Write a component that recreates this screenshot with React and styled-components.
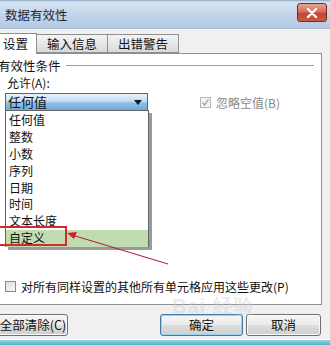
import React from 'react';
import styled, { createGlobalStyle } from 'styled-components';

const GlobalStyle = createGlobalStyle`
  html, body { margin: 0; padding: 0; background: #f0f0f0; }
  body { font-family: "Noto Sans CJK SC", "Noto Sans", sans-serif; }
`;

const Window = styled.div`
  position: relative;
  width: 330px;
  height: 345px;
  overflow: hidden;
  background: #f0f0f0;
  display: flex;
  flex-direction: column;
  color: #111;
`;

const TitleBar = styled.div`
  height: 29px;
  flex: none;
  display: flex;
  align-items: center;
  justify-content: space-between;
  padding: 0 3px 0 5px;
  box-sizing: border-box;
  background: linear-gradient(180deg, #8aa7c7 0px, #d6e3f1 2px, #c4d6ea 14px, #b3c9e2 100%);
  border-bottom: 1px solid #a8bdd6;
`;

const Title = styled.span`
  font-size: 12.5px;
  color: #1b2a3a;
`;

const CloseButton = styled.div`
  width: 28px;
  height: 17px;
  margin-top: -3px;
  border: 1px solid #7a2a20;
  border-radius: 3px;
  background: linear-gradient(180deg, #e9a493 0%, #d6705a 45%, #c24a36 55%, #c9583f 100%);
  display: flex;
  align-items: center;
  justify-content: center;
`;

const Body = styled.div`
  flex: 1;
  display: flex;
  flex-direction: column;
  margin-left: -2px;
`;

const TabRow = styled.div`
  display: flex;
  align-items: flex-end;
  height: 23px;
  margin-top: 1px;
  position: relative;
  z-index: 2;
`;

const Tab = styled.div`
  height: ${({ $active }) => ($active ? 21 : 19)}px;
  box-sizing: border-box;
  padding: 0 ${({ $active }) => ($active ? 8 : 10)}px 0 ${({ $active }) => ($active ? 5 : 10)}px;
  display: flex;
  align-items: center;
  font-size: 12.5px;
  line-height: 14px;
  border: 1px solid #8e8f8f;
  border-bottom: ${({ $active }) => ($active ? 'none' : '1px solid #8e8f8f')};
  margin-left: ${({ $active }) => ($active ? 0 : -1)}px;
  background: ${({ $active }) => ($active ? '#fff' : 'linear-gradient(180deg, #f4f4f4 0%, #e6e6e6 55%, #d9d9d9 100%)')};
  ${({ $active }) => $active && 'margin-bottom: -1px; border-left: none;'}
`;

const Panel = styled.div`
  position: relative;
  width: 324px;
  height: 252px;
  box-sizing: border-box;
  background: #fff;
  border: 1px solid #8e8f8f;
  border-left: none;
  padding: 3px 0 0 0;
  display: flex;
  flex-direction: column;
`;

const GroupHeader = styled.div`
  display: flex;
  align-items: center;
  gap: 5px;
  font-size: 12.5px;
  line-height: 17px;
  height: 17px;
  width: 316px;
`;

const GroupLine = styled.div`
  flex: 1;
  height: 1px;
  background: #a0a0a0;
`;

const Label = styled.div`
  font-size: 12px;
  margin: 1px 0 0 9px;
  height: 16px;
  line-height: 16px;
`;

const FieldRow = styled.div`
  display: flex;
  align-items: center;
  margin-top: 2px;
`;

const Select = styled.div`
  width: 143px;
  height: 18px;
  margin-left: 7px;
  box-sizing: border-box;
  border: 1px solid #5a6470;
  background: linear-gradient(180deg, #eaf3fb 0%, #c2dcf2 45%, #8fc0e6 55%, #6eaadb 100%);
  display: flex;
  align-items: center;
  justify-content: space-between;
  padding: 0 5px 0 2px;
  font-size: 13px;
  line-height: 16px;
`;

const Arrow = styled.div`
  width: 0;
  height: 0;
  border-left: 4px solid transparent;
  border-right: 4px solid transparent;
  border-top: 5px solid #1b1b1b;
`;

const CheckRow = styled.div`
  display: flex;
  align-items: center;
  gap: 5px;
  font-size: 12px;
  line-height: 15px;
  margin-left: ${({ $ml }) => $ml || 0}px;
  color: ${({ $disabled }) => ($disabled ? '#8a8a8a' : '#111')};
`;

const Box = styled.span`
  width: 11px;
  height: 11px;
  flex: none;
  box-sizing: border-box;
  border: 1px solid ${({ $disabled }) => ($disabled ? '#b8b8b8' : '#8a8a8a')};
  background: ${({ $disabled }) => ($disabled ? '#f4f4f4' : 'linear-gradient(135deg, #dcdcdc, #fafafa)')};
  display: inline-flex;
  align-items: center;
  justify-content: center;
`;

const Spacer = styled.div`
  flex: 1;
`;

const BottomCheck = styled.div`
  padding: 0 0 10px 7px;
`;

const DropList = styled.div`
  position: absolute;
  left: 7px;
  top: 56px;
  width: 144px;
  height: 137px;
  box-sizing: border-box;
  border: 1px solid #646464;
  background: #fff;
  box-shadow: 3px 3px 0 #9a9a9a;
  display: flex;
  flex-direction: column;
  padding-top: 1px;
  z-index: 3;
`;

const Item = styled.div`
  height: 16.9px;
  line-height: 16.9px;
  font-size: 12px;
  padding-left: 3px;
  background: ${({ $hot }) => ($hot ? '#c1dcb1' : 'transparent')};
`;

const RedBox = styled.div`
  position: absolute;
  left: -2px;
  top: 172px;
  width: 71px;
  height: 20px;
  box-sizing: border-box;
  border: 2px solid #d22b2b;
  z-index: 4;
`;

const Annotation = styled.svg`
  position: absolute;
  left: 60px;
  top: 170px;
  z-index: 5;
`;

const ButtonRow = styled.div`
  display: flex;
  align-items: center;
  height: 24px;
  margin-top: 8px;
  padding-right: 9px;
`;

const Button = styled.div`
  height: 22px;
  width: ${({ $w }) => $w}px;
  margin-left: ${({ $ml }) => $ml || 0}px;
  box-sizing: border-box;
  border: 1px solid ${({ $primary }) => ($primary ? '#3d7bad' : '#707070')};
  border-radius: 3px;
  background: linear-gradient(180deg, #f6f6f6 0%, #ebebeb 48%, #dddddd 52%, #cfcfcf 100%);
  box-shadow: ${({ $primary }) => ($primary ? 'inset 0 0 0 1px #9fd2f0' : 'inset 0 0 0 1px #fbfbfb')};
  display: flex;
  align-items: center;
  justify-content: center;
  font-size: 12.5px;
  line-height: 14px;
`;

const Footer = styled.div`
  margin-top: auto;
  height: 5px;
  border-top: 1px solid #fff;
  background: linear-gradient(180deg, #8fd3df 0%, #4fb3c6 100%);
  margin-left: 2px;
`;

const Watermark = styled.div`
  position: absolute;
  left: 172px;
  top: 296px;
  font-family: "Liberation Sans", sans-serif;
  font-size: 20px;
  line-height: 20px;
  font-weight: bold;
  color: rgba(200, 205, 212, 0.4);
  letter-spacing: 1px;
  z-index: 6;
  pointer-events: none;
`;

const items = ['任何值', '整数', '小数', '序列', '日期', '时间', '文本长度', '自定义'];

export default function App() {
  return (
    <>
      <GlobalStyle />
      <Window>
        <TitleBar>
          <Title>数据有效性</Title>
          <CloseButton>
            <svg width="12" height="10" viewBox="0 0 12 10">
              <path d="M2 1 L10 9 M10 1 L2 9" stroke="#fff" strokeWidth="2.4" strokeLinecap="round" />
            </svg>
          </CloseButton>
        </TitleBar>
        <Body>
          <TabRow>
            <Tab $active>设置</Tab>
            <Tab>输入信息</Tab>
            <Tab>出错警告</Tab>
          </TabRow>
          <Panel>
            <GroupHeader>有效性条件<GroupLine /></GroupHeader>
            <Label>允许(A):</Label>
            <FieldRow>
              <Select>任何值<Arrow /></Select>
              <CheckRow $disabled $ml={52}>
                <Box $disabled>
                  <svg width="9" height="9" viewBox="0 0 9 9">
                    <path d="M1.5 4.5 L3.5 7 L7.5 1.5" stroke="#a8a8a8" strokeWidth="1.4" fill="none" />
                  </svg>
                </Box>
                忽略空值(B)
              </CheckRow>
            </FieldRow>
            <Spacer />
            <BottomCheck>
              <CheckRow>
                <Box />
                对所有同样设置的其他所有单元格应用这些更改(P)
              </CheckRow>
            </BottomCheck>
            <DropList>
              {items.map(t => (
                <Item key={t} $hot={t === '自定义'}>{t}</Item>
              ))}
            </DropList>
            <RedBox />
            <Annotation width="120" height="45" viewBox="0 0 120 45">
              <path d="M110 40 L14 11" stroke="#b01c2c" strokeWidth="1" fill="none" />
              <path d="M9 9 L19 8 L16 15 Z" fill="#d2202a" />
            </Annotation>
          </Panel>
          <ButtonRow>
            <Button $w={70}>全部清除(C)</Button>
            <Spacer />
            <Button $w={83} $primary>确定</Button>
            <Button $w={75} $ml={3}>取消</Button>
          </ButtonRow>
          <Footer />
        </Body>
        <Watermark>Bai 经验</Watermark>
      </Window>
    </>
  );
}
